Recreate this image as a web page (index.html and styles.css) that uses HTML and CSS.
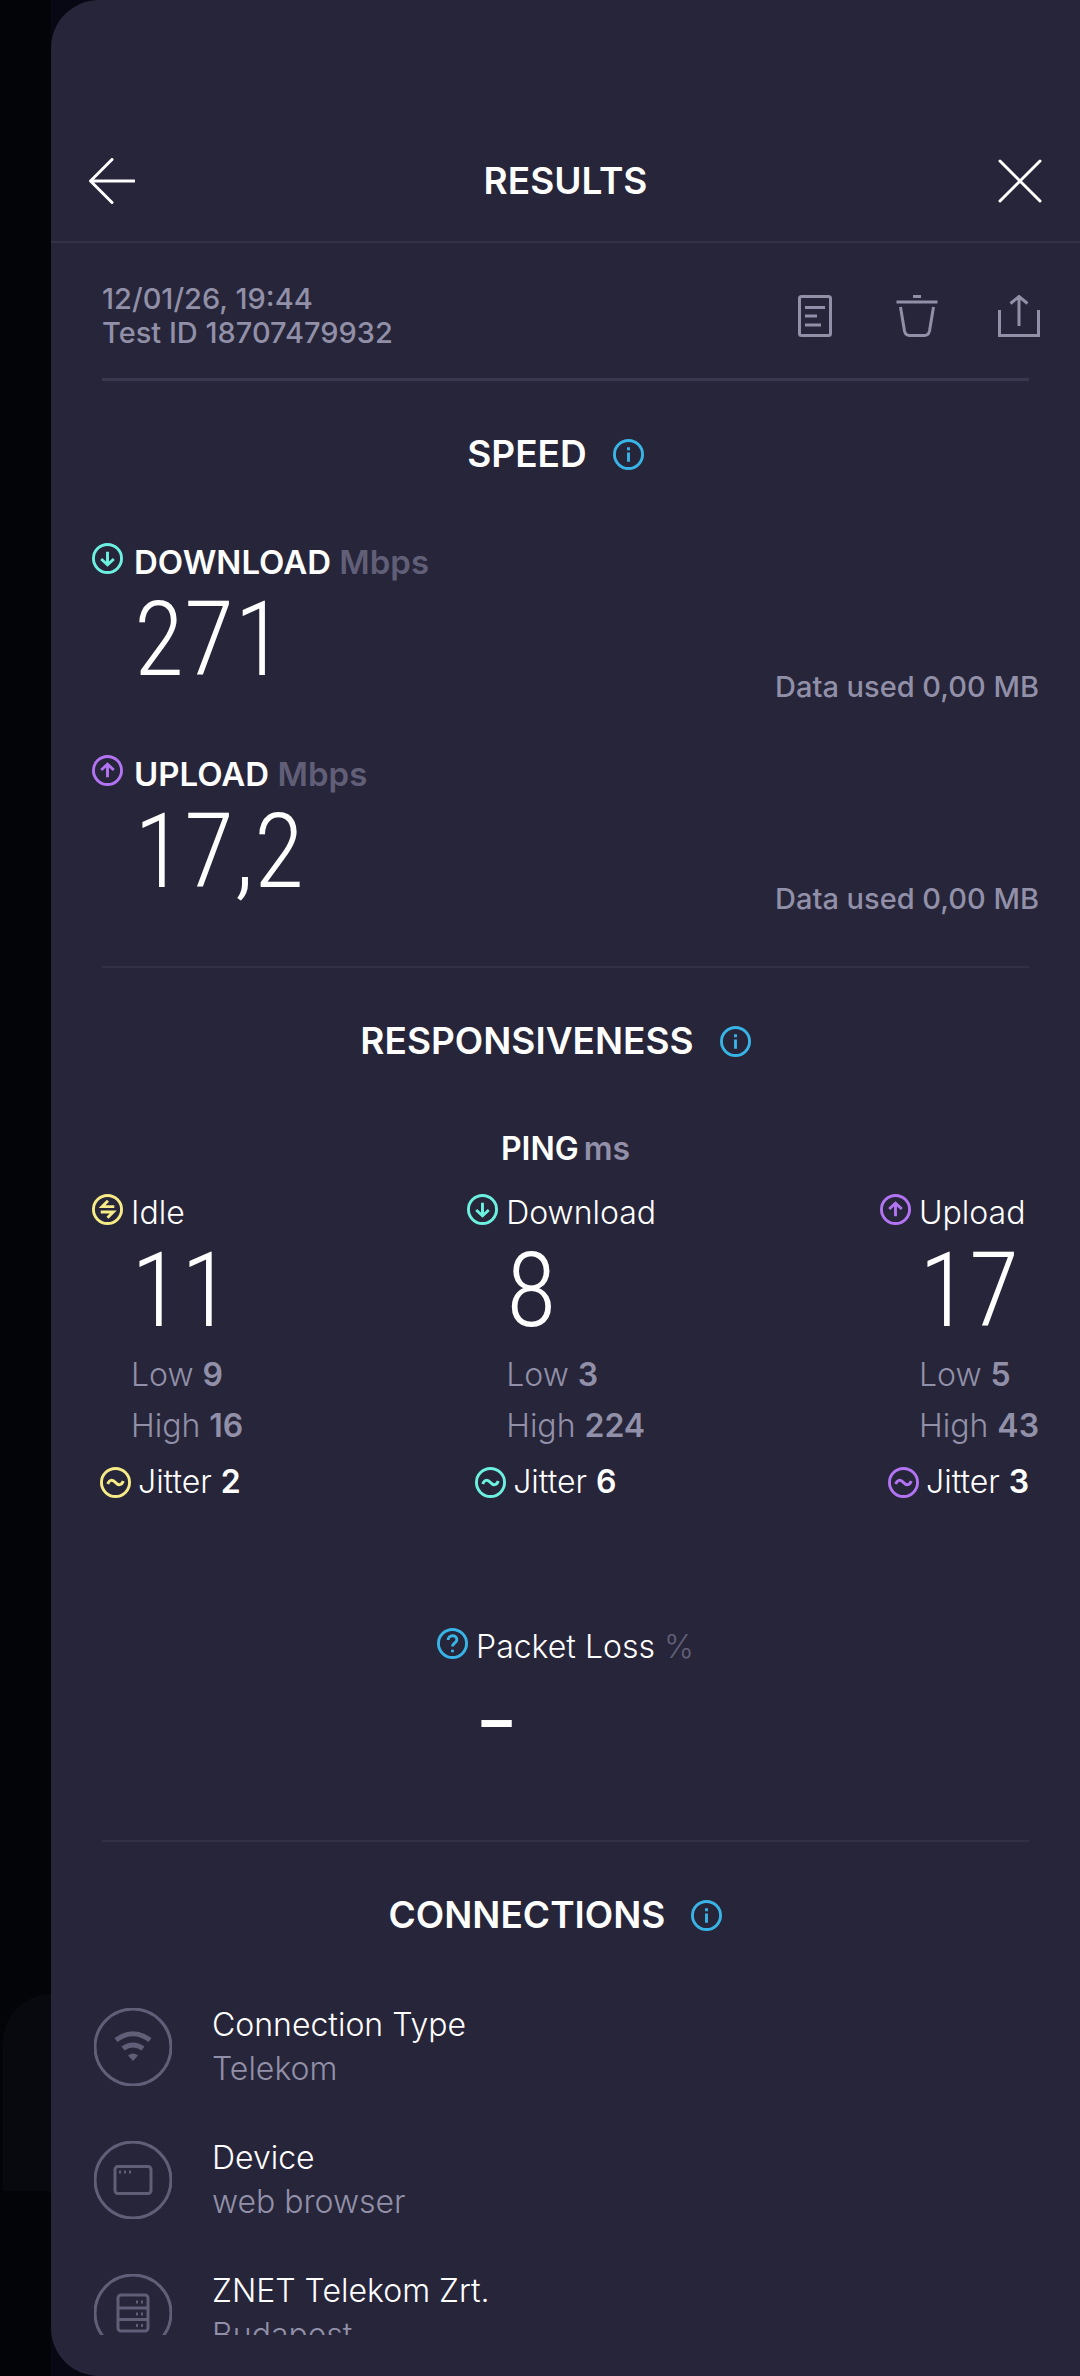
FILE: index.html
```html
<!DOCTYPE html>
<html lang="en">
<head>
<meta charset="utf-8">
<meta name="viewport" content="width=device-width, initial-scale=1">
<title>Results</title>
<link rel="stylesheet" href="styles.css">
</head>
<body>
<svg class="defs" aria-hidden="true">
  <symbol id="down" viewBox="0 0 32 32"><circle cx="16" cy="16" r="14.5"/><path d="M16 9v13M9.500 16.500l6.500 6 6.500-6"/></symbol>
  <symbol id="up" viewBox="0 0 32 32"><circle cx="16" cy="16" r="14.500"/><path d="M16 23V10M9.500 15.500l6.500-6 6.500 6"/></symbol>
  <symbol id="idle" viewBox="0 0 32 32"><circle cx="16" cy="16" r="14.500"/><path d="M23 13H10.500l6-6M9 18.500h13l-6 6"/></symbol>
  <symbol id="jitter" viewBox="0 0 32 32"><circle cx="16" cy="16" r="14.500"/><path d="M8 17.500c1.500-4.500 5-5 8-1.500s6.500 3 8-1.500"/></symbol>
  <symbol id="info" viewBox="0 0 32 32"><circle cx="16" cy="16" r="14.500"/><path d="M16 14v9.500M16 8.500v3"/></symbol>
  <symbol id="help" viewBox="0 0 32 32"><circle cx="16" cy="16" r="14.500"/><path d="M11.500 12.500c0-6 9-6 9-.5 0 3.500-4.500 3.500-4.500 7M16 22.500v2.500"/></symbol>
</svg>
<div class="app">
  <div class="gutter"><div class="ghost"></div></div>
  <div class="stage">
    <main class="panel">
      <header class="header">
        <button class="icon-button" aria-label="Back"><svg class="glyph" viewBox="0 0 46 46"><path d="M45 23H2M23 1.500L1.500 23 23 44.500"/></svg></button>
        <h1 class="heading">RESULTS</h1>
        <button class="icon-button" aria-label="Close"><svg class="glyph" viewBox="0 0 46 46"><path d="M4 3l40 40M44 3L4 43"/></svg></button>
      </header>
      <div class="scroll">
        <div class="meta">
          <div class="meta-text"><div>12/01/26, 19:44</div><div>Test ID 18707479932</div></div>
          <div class="actions">
            <button class="action" aria-label="Notes"><svg viewBox="0 0 42 42"><rect x="5.500" y="1.500" width="31" height="39" rx="2"/><path d="M11 12.500h20M11 21h12M11 30h16"/></svg></button>
            <button class="action" aria-label="Delete"><svg viewBox="0 0 42 42"><path d="M.500 7h41M17 1.500h8M4.500 12l4 24q1 4.500 5 4.500h15q4 0 5-4.500l4-24"/></svg></button>
            <button class="action" aria-label="Share"><svg viewBox="0 0 42 42"><path d="M1.500 15v25.500h39V15M21 31V2M12.500 8.500L21 1.500l8.500 7"/></svg></button>
          </div>
        </div>
        <hr class="rule rule-strong">

        <section class="section">
          <div class="title"><h2 class="heading">SPEED</h2><button class="info" aria-label="About speed"><svg class="mark blue"><use href="#info"/></svg></button></div>
          <div class="speeds">
            <div class="speed">
              <svg class="mark teal"><use href="#down"/></svg>
              <div class="reading"><div class="label strong">DOWNLOAD <span class="unit">Mbps</span></div><div class="number">271</div></div>
              <div class="used">Data used 0,00 MB</div>
            </div>
            <div class="speed">
              <svg class="mark purple"><use href="#up"/></svg>
              <div class="reading"><div class="label strong">UPLOAD <span class="unit">Mbps</span></div><div class="number">17,2</div></div>
              <div class="used">Data used 0,00 MB</div>
            </div>
          </div>
        </section>
        <hr class="rule">

        <section class="section">
          <div class="title"><h2 class="heading">RESPONSIVENESS</h2><button class="info" aria-label="About responsiveness"><svg class="mark blue"><use href="#info"/></svg></button></div>
          <h3 class="ping">PING<span class="ms">ms</span></h3>
          <div class="latencies">
            <div class="latency">
              <div class="metric"><svg class="mark yellow"><use href="#idle"/></svg>
                <div><div class="label">Idle</div><div class="number">11</div><div class="range">Low <b>9</b></div><div class="range">High <b>16</b></div></div></div>
              <div class="jitter"><svg class="mark yellow"><use href="#jitter"/></svg><span>Jitter <b>2</b></span></div>
            </div>
            <div class="latency">
              <div class="metric"><svg class="mark teal"><use href="#down"/></svg>
                <div><div class="label">Download</div><div class="number">8</div><div class="range">Low <b>3</b></div><div class="range">High <b>224</b></div></div></div>
              <div class="jitter"><svg class="mark teal"><use href="#jitter"/></svg><span>Jitter <b>6</b></span></div>
            </div>
            <div class="latency">
              <div class="metric"><svg class="mark purple"><use href="#up"/></svg>
                <div><div class="label">Upload</div><div class="number">17</div><div class="range">Low <b>5</b></div><div class="range">High <b>43</b></div></div></div>
              <div class="jitter"><svg class="mark purple"><use href="#jitter"/></svg><span>Jitter <b>3</b></span></div>
            </div>
          </div>
          <div class="loss">
            <div class="metric"><svg class="mark blue"><use href="#help"/></svg>
              <div><div class="label">Packet Loss <span class="unit">%</span></div><div class="number dash">–</div></div></div>
          </div>
        </section>
        <hr class="rule">

        <section class="section">
          <div class="title"><h2 class="heading">CONNECTIONS</h2><button class="info" aria-label="About connections"><svg class="mark blue"><use href="#info"/></svg></button></div>
          <ul class="connections">
            <li class="connection">
              <svg class="badge" viewBox="0 0 78 78"><circle cx="39" cy="39" r="38"/><path class="thick" d="M22 32Q39 19.500 56 32M29 40.500Q39 33.500 49 40.500"/><path class="solid" d="M34 47.500q5-4 10 0l-5 5.500z"/></svg>
              <div><div class="name">Connection Type</div><div class="value">Telekom</div></div>
            </li>
            <li class="connection">
              <svg class="badge" viewBox="0 0 78 78"><circle cx="39" cy="39" r="38"/><rect x="21" y="25.500" width="36" height="27" rx="3"/><path d="M25 31h2M30 31h2M35 31h2"/></svg>
              <div><div class="name">Device</div><div class="value">web browser</div></div>
            </li>
            <li class="connection">
              <svg class="badge" viewBox="0 0 78 78"><circle cx="39" cy="39" r="38"/><rect x="24" y="21" width="30" height="36" rx="3"/><path d="M24 34h30M24 45.500h30M42 28h2M47 28h2M42 40h2M47 40h2M42 51.500h2M47 51.500h2"/></svg>
              <div><div class="name">ZNET Telekom Zrt.</div><div class="value">Budapest</div></div>
            </li>
          </ul>
        </section>
      </div>
    </main>
  </div>
</div>
</body>
</html>
```
FILE: styles.css
```css
* { box-sizing: border-box; }

body {
  margin: 0;
  background: #030408;
  color: #fff;
  font-family: Inter, "Liberation Sans", sans-serif;
  font-size: 32px;
  line-height: 38px;
}

h1, h2, h3, ul { margin: 0; padding: 0; }
svg { fill: none; stroke: currentColor; stroke-width: 3; }
.defs { position: absolute; width: 0; height: 0; }

button {
  display: block;
  padding: 0;
  border: 0;
  background: none;
  color: inherit;
  cursor: pointer;
}
button svg { display: block; }

.app { display: flex; height: 100vh; }

/* Strip of the dimmed page behind the panel */
.gutter {
  display: flex;
  flex: 0 0 51px;
  flex-direction: column;
  justify-content: flex-end;
  padding: 0 0 185px 3px;
}
.ghost {
  height: 197px;
  border-radius: 48px 0 0 0;
  background: #08090e;
}

.stage { flex: 1; min-width: 0; background: #080714; }
.panel {
  display: flex;
  flex-direction: column;
  height: 100%;
  padding-bottom: 41px;
  border-radius: 48px 0 0 48px;
  background: #272539;
}

.header {
  display: flex;
  align-items: center;
  justify-content: space-between;
  padding: 157px 38px 36px;
  border-bottom: 2px solid #343249;
}
.icon-button { width: 46px; height: 46px; }
.glyph { width: 46px; height: 46px; stroke-linecap: round; }
.heading {
  font-size: 37px;
  font-weight: 600;
  line-height: 48px;
}

.scroll { flex: 1; min-height: 0; overflow-y: auto; scrollbar-width: none; }

.meta {
  display: flex;
  align-items: center;
  justify-content: space-between;
  padding: 39px 40px 28px 51px;
  color: #9190a8;
}
.meta-text, .used { font-size: 29px; font-weight: 500; line-height: 34px; }
.actions { display: flex; gap: 60px; }
.action, .action svg { width: 42px; height: 42px; }

.rule { margin: 0 51px; border: 0; border-top: 2px solid #323047; }
.rule-strong { border-top: 3px solid #3a384f; }

.section { padding: 49px 41px 0; }
.title {
  display: flex;
  align-items: center;
  justify-content: center;
  gap: 26px;
  margin-bottom: 65px;
  padding-right: 20px;
}
.mark { display: block; flex: none; width: 31px; height: 31px; stroke-width: 3; }
.teal { color: #6cf0e0; }
.purple { color: #b274f2; }
.yellow { color: #f6eb86; }
.blue { color: #38b4e6; }

.strong { font-size: 33px; font-weight: 600; }
.unit { color: #615f78; }
.number {
  margin: 15px 0 14px;
  font-family: "Roboto Condensed", "Liberation Sans Narrow", Roboto, sans-serif;
  font-size: 103px;
  font-weight: 300;
  line-height: 88px;
}

.speeds { display: grid; gap: 51px; padding-bottom: 50px; }
.speed { display: flex; gap: 11px; }
.speed .number { margin-bottom: 20px; }
.reading { flex: 1; }
.used { align-self: flex-end; color: #9190a8; }

.ping {
  margin-bottom: 26px;
  font-size: 32px;
  font-weight: 600;
  text-align: center;
}
.ms { margin-left: 5px; color: #9190a8; }

.latencies { display: flex; justify-content: space-between; }
.metric { display: flex; gap: 8px; }
.range { color: #9190a8; line-height: 51px; }
.label, .range, .jitter, .name, .value { white-space: nowrap; }
.label:not(.strong), .range, .jitter, .name, .value { font-weight: 300; }
b { font-weight: 600; }
.jitter {
  display: flex;
  align-items: center;
  gap: 7px;
  margin-top: 12px;
  padding-left: 8px;
}
.loss { display: flex; justify-content: center; padding: 127px 0 57px; }
.dash { font-size: 72px; font-weight: 500; }

.connections { display: grid; gap: 45px; margin-top: -1px; list-style: none; }
.connection { display: flex; align-items: center; gap: 40px; padding-left: 2px; }
.connection div { line-height: 44px; }
.badge { flex: none; width: 78px; height: 78px; color: #615f78; stroke-width: 3; }
.thick { stroke-width: 5; }
.solid { fill: currentColor; stroke: none; }
.value { color: #9190a8; }
```
